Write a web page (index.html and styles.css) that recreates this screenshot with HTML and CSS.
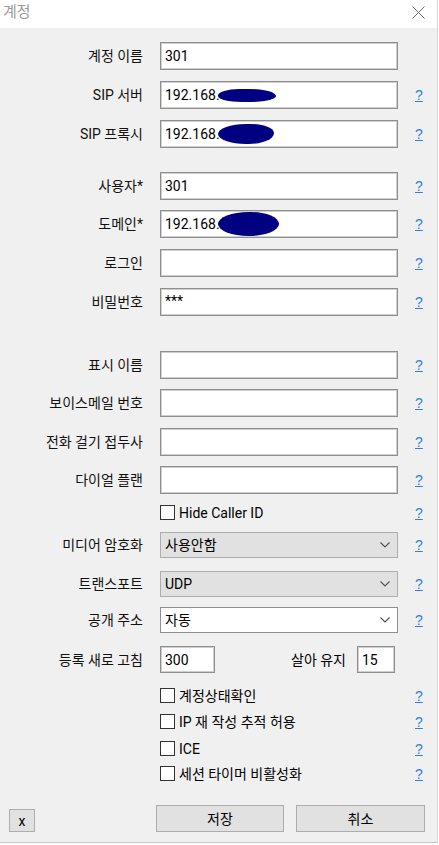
FILE: index.html
```html
<!DOCTYPE html>
<html lang="ko">
<head>
<meta charset="utf-8">
<title>계정</title>
<link rel="stylesheet" href="styles.css">
</head>
<body>
<div class="window">
  <div class="titlebar">
    <span class="title">계정</span>
    <svg class="close" width="13" height="13" viewBox="0 0 13 13"><path d="M0.5 0.5 L12.5 12.5 M12.5 0.5 L0.5 12.5" stroke="#6b6b6b" stroke-width="1"/></svg>
  </div>
  <div class="form">
    <div class="row g14"><div class="lbl">계정 이름</div><div class="field"><div class="input">301</div></div></div>
    <div class="row g11"><div class="lbl">SIP 서버</div><div class="field"><div class="input">192.168.<span class="blob b1"></span></div></div><a class="help">?</a></div>
    <div class="row g11"><div class="lbl">SIP 프록시</div><div class="field"><div class="input">192.168.<span class="blob b2"></span></div></div><a class="help">?</a></div>

    <div class="row g24"><div class="lbl">사용자*</div><div class="field"><div class="input">301</div></div><a class="help">?</a></div>
    <div class="row g10"><div class="lbl">도메인*</div><div class="field"><div class="input">192.168.<span class="blob b3"></span></div></div><a class="help">?</a></div>
    <div class="row g11"><div class="lbl">로그인</div><div class="field"><div class="input"></div></div><a class="help">?</a></div>
    <div class="row g11"><div class="lbl">비밀번호</div><div class="field"><div class="input top">***</div></div><a class="help">?</a></div>

    <div class="row g35"><div class="lbl">표시 이름</div><div class="field"><div class="input"></div></div><a class="help">?</a></div>
    <div class="row g10"><div class="lbl">보이스메일 번호</div><div class="field"><div class="input"></div></div><a class="help">?</a></div>
    <div class="row g11"><div class="lbl">전화 걸기 접두사</div><div class="field"><div class="input"></div></div><a class="help">?</a></div>
    <div class="row g10"><div class="lbl">다이얼 플랜</div><div class="field"><div class="input"></div></div><a class="help">?</a></div>

    <div class="row cbrow g11"><div class="lbl"></div><div class="field"><span class="cb"></span><span class="cblabel">Hide Caller ID</span></div><a class="help">?</a></div>

    <div class="row combo-row g12"><div class="lbl">미디어 암호화</div><div class="field"><div class="combo">사용안함<svg class="chev" width="10" height="6" viewBox="0 0 10 6"><path d="M0.5 0.5 L5 5 L9.5 0.5" fill="none" stroke="#555" stroke-width="1.2"/></svg></div></div><a class="help">?</a></div>
    <div class="row combo-row g13"><div class="lbl">트랜스포트</div><div class="field"><div class="combo">UDP<svg class="chev" width="10" height="6" viewBox="0 0 10 6"><path d="M0.5 0.5 L5 5 L9.5 0.5" fill="none" stroke="#555" stroke-width="1.2"/></svg></div></div><a class="help">?</a></div>
    <div class="row combo-row g10"><div class="lbl">공개 주소</div><div class="field"><div class="combo white">자동<svg class="chev" width="10" height="6" viewBox="0 0 10 6"><path d="M0.5 0.5 L5 5 L9.5 0.5" fill="none" stroke="#555" stroke-width="1.2"/></svg></div></div><a class="help">?</a></div>

    <div class="row refresh-row g13"><div class="lbl">등록 새로 고침</div><div class="field split"><div class="input short">300</div><div class="lbl2">살아 유지</div><div class="input tiny">15</div></div></div>

    <div class="row cbrow g15"><div class="lbl"></div><div class="field"><span class="cb"></span><span class="cblabel">계정상태확인</span></div><a class="help">?</a></div>
    <div class="row cbrow g11"><div class="lbl"></div><div class="field"><span class="cb"></span><span class="cblabel">IP 재 작성 추적 허용</span></div><a class="help">?</a></div>
    <div class="row cbrow g12"><div class="lbl"></div><div class="field"><span class="cb"></span><span class="cblabel">ICE</span></div><a class="help">?</a></div>
    <div class="row cbrow g10"><div class="lbl"></div><div class="field"><span class="cb"></span><span class="cblabel">세션 타이머 비활성화</span></div><a class="help">?</a></div>
  </div>
  <div class="footer">
    <button class="btn btn-x">x</button>
    <button class="btn btn-save">저장</button>
    <button class="btn btn-cancel">취소</button>
  </div>
</div>
</body>
</html>
```

FILE: styles.css
```css
html, body {
  margin: 0;
  padding: 0;
  background: #ffffff;
}

body {
  font-family: Roboto, "Noto Sans CJK KR", sans-serif;
  font-size: 14px;
  color: #000;
  line-height: 1;
}

.window {
  width: 437px;
  height: 842px;
  background: #f0f0f0;
  border-right: 1px solid #d6d6d6;
  border-bottom: 1px solid #c9c9c9;
  display: flex;
  flex-direction: column;
}

.titlebar {
  height: 28px;
  flex: none;
  background: #ffffff;
  display: flex;
  align-items: center;
  justify-content: space-between;
  padding: 0 12px 0 3px;
}

.title {
  font-size: 15px;
  color: #9a9a9a;
  margin-top: -4px;
}

.close {
  margin-top: -4px;
}

.form {
  display: flex;
  flex-direction: column;
}

.row {
  display: flex;
  align-items: center;
  height: 28px;
  flex: none;
}

.g10 { margin-top: 10px; }
.g11 { margin-top: 11px; }
.g12 { margin-top: 12px; }
.g13 { margin-top: 13px; }
.g14 { margin-top: 14px; }
.g15 { margin-top: 15px; }
.g24 { margin-top: 24px; }
.g35 { margin-top: 35px; }

.combo-row { height: 26px; }
.refresh-row { height: 27px; }
.cbrow { height: 15px; }

.lbl {
  width: 143px;
  margin-right: 17px;
  text-align: right;
  white-space: nowrap;
  color: #111;
}

.field {
  width: 238px;
  height: 100%;
  display: flex;
  align-items: center;
}

.input {
  box-sizing: border-box;
  width: 100%;
  height: 100%;
  background: #ffffff;
  border: 1px solid #8f8f8f;
  box-shadow: inset 0 0 0 1px #cfcfcf;
  padding-left: 4px;
  display: flex;
  align-items: center;
  white-space: nowrap;
  overflow: hidden;
}

.input.top {
  align-items: flex-start;
  padding-top: 5px;
}

.blob {
  display: inline-block;
  background: #000080;
  margin-left: -2px;
}

.b1 {
  width: 58px;
  height: 13px;
  border-radius: 40% 50% 50% 45% / 55% 60% 50% 50%;
}

.b2 {
  width: 56px;
  height: 20px;
  border-radius: 50% 40% 45% 50% / 50% 45% 55% 50%;
}

.b3 {
  width: 61px;
  height: 24px;
  border-radius: 50% 45% 50% 50% / 50% 50% 50% 50%;
}

.help {
  margin-left: 17px;
  color: #2f7fe0;
  text-decoration: underline;
  font-size: 14px;
  font-family: "Liberation Sans", sans-serif;
}

.cb {
  box-sizing: border-box;
  width: 15px;
  height: 15px;
  flex: none;
  background: #ffffff;
  border: 1px solid #333333;
}

.cblabel {
  margin-left: 4px;
  white-space: nowrap;
}

.combo {
  box-sizing: border-box;
  width: 100%;
  height: 100%;
  background: #e1e1e1;
  border: 1px solid #adadad;
  padding: 0 7px 0 4px;
  display: flex;
  align-items: center;
  justify-content: space-between;
}

.combo.white {
  background: #ffffff;
  border-color: #8f8f8f;
}

.split {
  width: 235px;
  margin-right: 3px;
}

.input.short {
  width: 55px;
  flex: none;
}

.input.tiny {
  width: 38px;
  flex: none;
}

.lbl2 {
  flex: 1;
  text-align: right;
  margin-right: 11px;
  white-space: nowrap;
}

.footer {
  display: flex;
  align-items: flex-end;
  margin-top: 24px;
  padding-left: 9px;
}

.btn {
  box-sizing: border-box;
  background: #e1e1e1;
  border: 1px solid #adadad;
  font-family: Roboto, "Noto Sans CJK KR", sans-serif;
  font-size: 14px;
  color: #000;
  padding: 0;
  margin: 0;
  line-height: 1;
}

.btn-x {
  width: 26px;
  height: 23px;
}

.btn-save {
  width: 128px;
  height: 27px;
  margin-left: 121px;
}

.btn-cancel {
  width: 129px;
  height: 27px;
  margin-left: 12px;
}
```
